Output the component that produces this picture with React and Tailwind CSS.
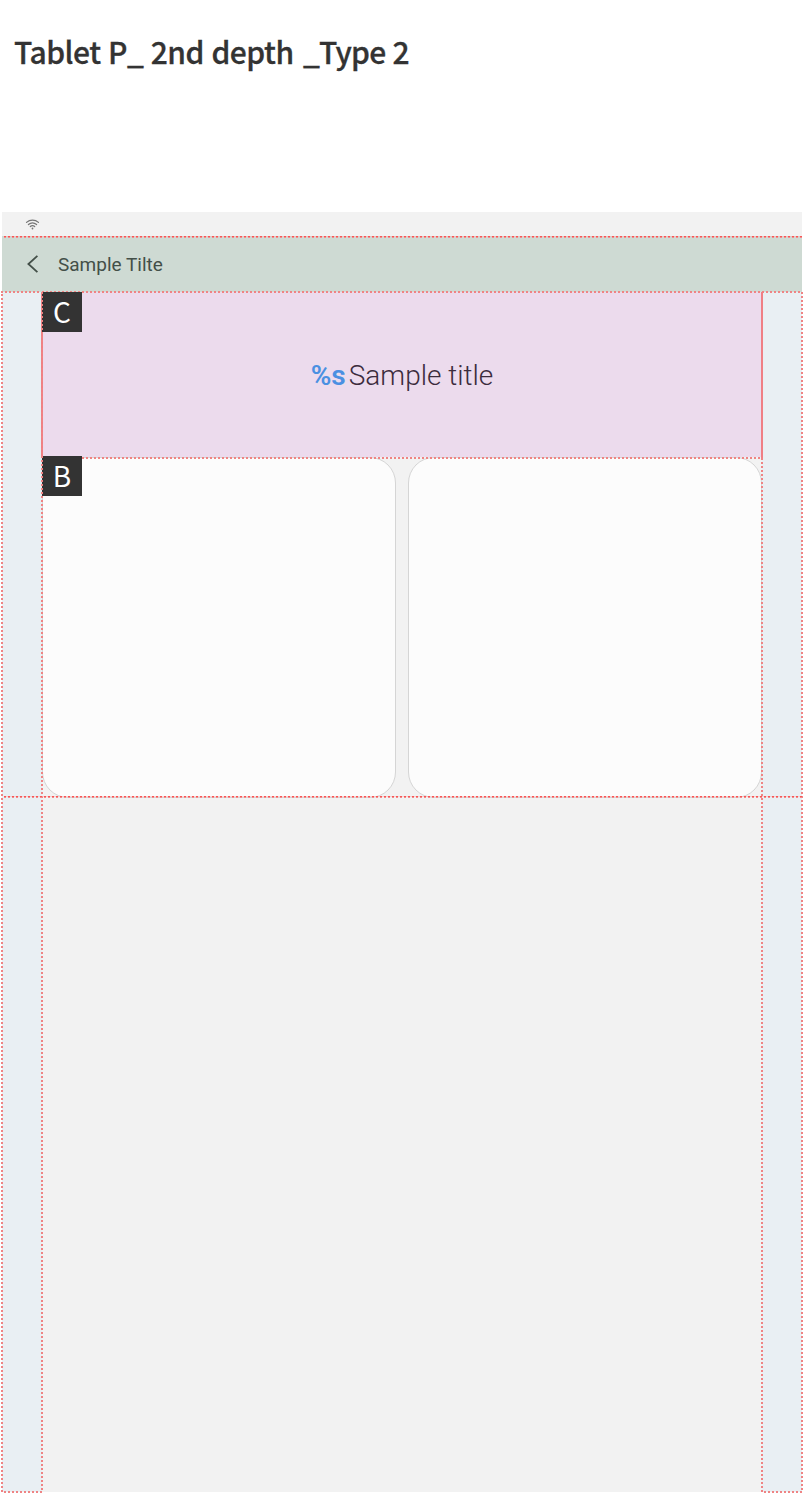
const H = "absolute h-[2px] bg-[repeating-linear-gradient(90deg,#ef8484_0_2px,transparent_2px_4px)]";
const V = "absolute w-[2px] bg-[repeating-linear-gradient(180deg,#ef8484_0_2px,transparent_2px_4px)]";
const RED = "absolute left-[2px] right-0 flex h-[2px] flex-col";

function Tag({ children, className }) {
  return (
    <div className={`absolute left-[40px] flex h-10 w-10 items-center justify-center bg-[#333333] font-['Noto_Sans_CJK_KR','Noto_Sans',sans-serif] text-[28px] font-normal leading-none text-white ${className}`}>
      <span className="-mt-[3px]">{children}</span>
    </div>
  );
}

function RedGuide({ className }) {
  return (
    <div className={`${RED} ${className}`}>
      <div className="h-px bg-[repeating-linear-gradient(90deg,#f95555_0_2px,#f7b4b080_2px_4px)]" />
      <div className="h-px bg-[repeating-linear-gradient(90deg,#f08c8c_0_2px,transparent_2px_4px)]" />
    </div>
  );
}

function WifiIcon() {
  return (
    <svg className="ml-[23px] h-[12px] w-[15px]" viewBox="0 0 15 12" fill="none" stroke="#757575" strokeWidth="1.2" strokeLinecap="round">
      <path d="M1.5 4.4C5 1.3 10 1.3 13.5 4.4" />
      <path d="M3.4 6.5C6 4.3 9 4.3 11.6 6.5" />
      <path d="M5.3 8.5C6.7 7.3 8.3 7.3 9.7 8.5" />
      <circle cx="7.5" cy="10.5" r="0.9" fill="#757575" stroke="none" />
    </svg>
  );
}

export default function App() {
  return (
    <div className="flex h-[1494px] w-[804px] flex-col bg-white">
      <header className="h-[212px] pl-[14px] pt-[27px]">
        <h1 className="whitespace-nowrap font-['Noto_Sans_CJK_KR','Noto_Sans',sans-serif] text-[30px] font-medium leading-[48px] tracking-[-0.5px] text-[#333333] [-webkit-text-stroke:0.3px_#333333] [word-spacing:1.2px]">
          Tablet P_ 2nd depth <span className="ml-[2px] tracking-[-0.8px]">_Type 2</span>
        </h1>
      </header>
      <main className="relative ml-[2px] flex h-[1280px] w-[800px] flex-col bg-[#f2f2f2]">
        <div className="flex h-6 items-center">
          <WifiIcon />
        </div>
        <div className="flex h-14 items-center bg-[#cedad3]">
          <svg className="ml-[24px] h-[20px] w-[14px]" viewBox="0 0 14 20" fill="none" stroke="#434f48" strokeWidth="1.8">
            <path d="M11.4 1.8L2.4 10L11.4 18.2" />
          </svg>
          <span className="ml-[18px] font-[Roboto,sans-serif] text-[19px] leading-none text-[#434f48]">Sample Tilte</span>
        </div>
        <div className="flex flex-1">
          <aside className="w-10 bg-[#e9eff3]" />
          <section className="w-[720px]">
            <div className="flex h-[165px] items-center justify-center gap-[3px] bg-[#ecdbed] pt-[3px] font-[Roboto,sans-serif] text-[28px] leading-none">
              <span className="font-semibold text-[#4a90e2]">%s</span>
              <span className="font-light text-[#3c2c3d]">Sample title</span>
            </div>
            <div className="grid h-[341px] grid-cols-2 gap-3">
              <div className="rounded-[26px] border border-[#d5d5d5] bg-[#fcfcfc]" />
              <div className="rounded-[26px] border border-[#d5d5d5] bg-[#fcfcfc]" />
            </div>
          </section>
          <aside className="w-10 bg-[#e9eff3]" />
        </div>
        <RedGuide className="top-[24px]" />
        <div className={`${H} -left-px top-[79px] w-[40px]`} />
        <div className={`${H} left-[40px] right-0 top-[79px]`} />
        <div className={`${H} left-[80px] right-[40px] top-[245px]`} />
        <div className="absolute left-[39px] top-[80px] h-[166px] w-[2px] bg-[#f07f84]" />
        <div className="absolute left-[759px] top-[80px] h-[166px] w-[2px] bg-[#f07f84]" />
        <Tag className="top-[80px]">C</Tag>
        <Tag className="top-[244px]">B</Tag>
        <div className={`${V} -left-px bottom-0 top-[82px]`} />
        <div className={`${V} bottom-0 left-[39px] top-[80px]`} />
        <div className={`${V} bottom-0 left-[759px] top-[246px]`} />
        <div className={`${V} -right-px bottom-0 top-[80px]`} />
        <RedGuide className="top-[584px]" />
        <div className={`${H} -bottom-px left-[2px] w-[38px]`} />
        <div className={`${H} -bottom-px left-[762px] w-[38px]`} />
      </main>
    </div>
  );
}
